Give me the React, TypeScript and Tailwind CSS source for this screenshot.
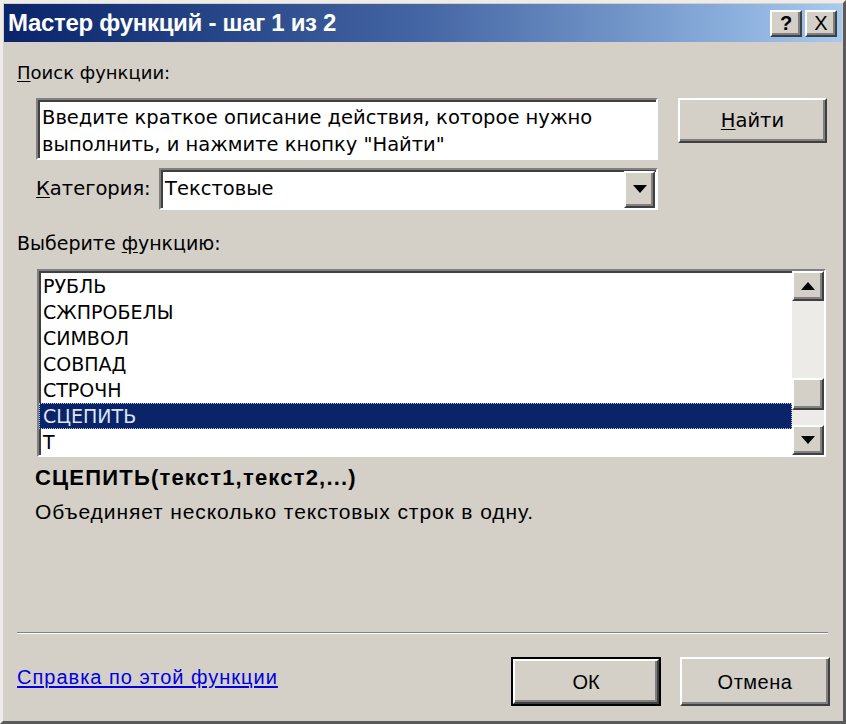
import React from "react";

const raised =
  "border-2 border-t-[#ffffff] border-l-[#ffffff] border-r-[#404040] border-b-[#404040] shadow-[inset_-2px_-2px_0_#808080]";
const sunken =
  "border-2 border-t-[#808080] border-l-[#808080] border-r-[#ffffff] border-b-[#ffffff] shadow-[inset_2px_2px_0_#404040]";

function TriDown() {
  return (
    <svg width="16" height="10" viewBox="0 0 16 10">
      <polygon points="1,1 15,1 8,9" fill="#000" />
    </svg>
  );
}
function TriUp() {
  return (
    <svg width="16" height="10" viewBox="0 0 16 10">
      <polygon points="1,9 15,9 8,1" fill="#000" />
    </svg>
  );
}

export default function App() {
  const items = ["РУБЛЬ", "СЖПРОБЕЛЫ", "СИМВОЛ", "СОВПАД", "СТРОЧН", "СЦЕПИТЬ", "Т"];
  return (
    <div className="w-[846px] h-[724px] bg-[#d4d0c8] flex flex-col p-[1px] border-t-[3px] border-l-[3px] border-r-[3px] border-b-[3px] border-t-[#eeece8] border-l-[#eeece8] border-r-[#5a5a5a] border-b-[#5a5a5a] overflow-hidden font-['Liberation_Sans',sans-serif] text-black">
      {/* Title bar */}
      <div className="h-[38px] shrink-0 flex items-center justify-between bg-linear-to-r from-[#0a246a] via-[#4566a4] to-[#a6caf0] pl-[4px] pr-[5px]">
        <span className="text-white font-bold text-[24px] tracking-[-0.3px] leading-none">
          Мастер функций - шаг 1 из 2
        </span>
        <div className="flex gap-[3px]">
          <div className={`w-[32px] h-[27px] bg-[#d4d0c8] flex items-center justify-center ${raised}`}>
            <span className="font-bold text-[20px] leading-none">?</span>
          </div>
          <div className={`w-[32px] h-[27px] bg-[#d4d0c8] flex items-center justify-center ${raised}`}>
            <span className="text-[20px] leading-none">X</span>
          </div>
        </div>
      </div>

      {/* Content */}
      <div className="flex flex-col pl-[13px] pr-[13px]">
        <div className="mt-[19px] font-['DejaVu_Sans',sans-serif] text-[18px] leading-[24px]">
          <span className="underline underline-offset-2">П</span>оиск функции:
        </div>

        <div className="flex mt-[13px] ml-[19px]">
          <div className={`w-[622px] h-[62px] bg-white ${sunken} pl-[4px] pt-[4px] font-['DejaVu_Sans',sans-serif] text-[19.5px] leading-[27px]`}>
            Введите краткое описание действия, которое нужно
            <br />
            выполнить, и нажмите кнопку "Найти"
          </div>
          <div className={`ml-[20px] w-[149px] h-[45px] bg-[#d4d0c8] ${raised} flex items-center justify-center font-['DejaVu_Sans',sans-serif] text-[19.5px]`}>
            <span>
              <span className="underline underline-offset-2">Н</span>айти
            </span>
          </div>
        </div>

        <div className="flex items-center mt-[8px] ml-[19px]">
          <div className="w-[123px] font-['DejaVu_Sans',sans-serif] text-[19.5px] leading-[24px]">
            <span className="underline underline-offset-2">К</span>атегория:
          </div>
          <div className={`w-[499px] h-[42px] bg-white ${sunken} flex items-center justify-between`}>
            <span className="pl-[4px] font-['DejaVu_Sans',sans-serif] text-[19.5px]">Текстовые</span>
            <div className={`w-[31px] h-[37px] mr-[1px] bg-[#d4d0c8] ${raised} flex items-center justify-center`}>
              <TriDown />
            </div>
          </div>
        </div>

        <div className="mt-[21px] font-['DejaVu_Sans',sans-serif] text-[19px] leading-[24px]">
          Выберите <span className="underline underline-offset-2">ф</span>ункцию:
        </div>

        <div className={`mt-[14px] ml-[20px] w-[789px] h-[188px] bg-white ${sunken} flex`}>
          <div className="flex-1 flex flex-col pt-[2px] font-['DejaVu_Sans',sans-serif] text-[19px]">
            {items.map((it) => {
              const sel = it === "СЦЕПИТЬ";
              return (
                <div
                  key={it}
                  className={
                    sel
                      ? "h-[26px] flex items-center pl-[3px] bg-[#0a246a] text-[#dfe3ef] border border-dotted border-[#c0c4d8]"
                      : "h-[26px] flex items-center pl-[4px]"
                  }
                >
                  {it}
                </div>
              );
            })}
          </div>
          <div className="w-[32px] flex flex-col bg-[#ecebe8]">
            <div className={`h-[30px] bg-[#d4d0c8] ${raised} flex items-center justify-center`}>
              <TriUp />
            </div>
            <div className="flex-1 flex flex-col">
              <div className="h-[77px]" />
              <div className={`h-[32px] bg-[#d4d0c8] ${raised}`} />
            </div>
            <div className={`h-[30px] bg-[#d4d0c8] ${raised} flex items-center justify-center`}>
              <TriDown />
            </div>
          </div>
        </div>

        <div className="mt-[9px] ml-[18px] font-bold text-[22px] leading-[24px] tracking-[1.2px]">
          СЦЕПИТЬ(текст1,текст2,...)
        </div>
        <div className="mt-[10px] ml-[18px] text-[21px] leading-[24px] tracking-[0.9px]">
          Объединяет несколько текстовых строк в одну.
        </div>

        <div className="mt-[108px] w-[811px] h-[2px] border-t border-t-[#808080] border-b border-b-[#ffffff]" />

        <div className="flex mt-[23px]">
          <a className="mt-[8px] text-[20px] leading-[24px] tracking-[1px] text-[#0000e0] underline underline-offset-2 cursor-pointer">
            Справка по этой функции
          </a>
          <div className="ml-auto flex gap-[19px] mr-[-1px]">
            <div className="w-[150px] h-[49px] border-2 border-black">
              <div className={`w-full h-full bg-[#d4d0c8] ${raised} flex items-center justify-center text-[20px]`}>
                ОК
              </div>
            </div>
            <div className={`w-[150px] h-[49px] bg-[#d4d0c8] ${raised} flex items-center justify-center text-[20px] tracking-[0.5px]`}>
              Отмена
            </div>
          </div>
        </div>
      </div>
    </div>
  );
}
